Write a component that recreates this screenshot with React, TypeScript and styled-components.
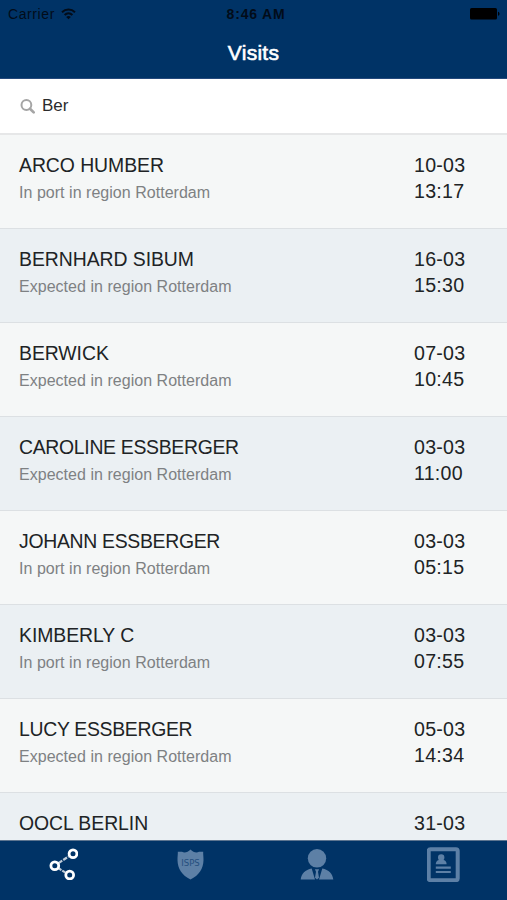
import React from "react";
import styled, { createGlobalStyle } from "styled-components";

const GlobalStyle = createGlobalStyle`
  *, *::before, *::after { box-sizing: border-box; }
  body {
    margin: 0;
    font-family: "Liberation Sans", Arial, Helvetica, sans-serif;
    color: #202325;
  }
`;

const Screen = styled.div`
  display: flex;
  flex-direction: column;
  height: 900px;
  overflow: hidden;
  background: #f5f7f7;
`;

const Header = styled.header`
  flex: none;
  height: 79px;
  background: #003366;
  border-bottom: 1px solid #24497c;
`;

const StatusBar = styled.div`
  display: grid;
  grid-template-columns: 1fr auto 1fr;
  align-items: center;
  height: 27px;
  padding: 0 7px 0 8px;
  color: #020c19;
`;

const Carrier = styled.div`
  display: flex;
  align-items: center;
  gap: 6px;
  font-size: 14px;
  letter-spacing: 0.6px;
`;

const Clock = styled.div`
  padding-left: 4px;
  font-size: 14px;
  font-weight: 700;
  letter-spacing: 0.8px;
`;

const BatterySlot = styled.div`
  display: flex;
  justify-content: flex-end;
`;

const Title = styled.h1`
  margin: 0;
  height: 51px;
  line-height: 51px;
  text-align: center;
  color: #ffffff;
  font-size: 21px;
  font-weight: 400;
  letter-spacing: 0.25px;
  -webkit-text-stroke: 0.6px #ffffff;
`;

const SearchBar = styled.label`
  flex: none;
  display: flex;
  align-items: center;
  gap: 7px;
  height: 56px;
  padding: 0 20px;
  background: #ffffff;
  border-bottom: 2px solid #e6e7e8;
`;

const SearchInput = styled.input`
  flex: 1;
  min-width: 0;
  padding: 0;
  border: 0;
  outline: 0;
  background: transparent;
  color: #2b2b2b;
  font: 17px "Liberation Sans", Arial, sans-serif;
`;

const List = styled.ul`
  flex: 1;
  min-height: 0;
  overflow: hidden;
  margin: 0;
  padding: 0;
  list-style: none;
`;

const Row = styled.li`
  display: grid;
  grid-template-columns: 1fr 73px;
  height: 94px;
  padding: 17px 20px 0 19px;
  background: #f5f7f7;
  border-bottom: 1px solid #dce0e3;

  &:nth-child(even) { background: #ebf0f3; }
`;

const Name = styled.div<{ $tight: boolean }>`
  height: 27px;
  line-height: 27px;
  font-size: 19.4px;
  letter-spacing: ${(p) => (p.$tight ? "-0.3px" : "-0.05px")};
  white-space: nowrap;
`;

const Status = styled.div`
  height: 26px;
  line-height: 28px;
  color: #7e8183;
  font-size: 16px;
  letter-spacing: 0.03px;
  white-space: nowrap;
`;

const Moment = styled.div`
  line-height: 26px;
  font-size: 19.6px;
  letter-spacing: 0.25px;
  white-space: nowrap;
`;

const TabBar = styled.nav`
  flex: none;
  display: grid;
  grid-template-columns: repeat(4, 1fr);
  height: 60px;
  background: #003366;
  border-top: 1px solid #5d7590;
`;

const Tab = styled.button<{ $active?: boolean }>`
  display: flex;
  justify-content: center;
  align-items: flex-start;
  padding: 5px 0 0;
  border: 0;
  background: transparent;
  color: ${(p) => (p.$active ? "#ffffff" : "#5d80a6")};
`;

const visits = [
  ["ARCO HUMBER", "In port in region Rotterdam", "10-03", "13:17"],
  ["BERNHARD SIBUM", "Expected in region Rotterdam", "16-03", "15:30"],
  ["BERWICK", "Expected in region Rotterdam", "07-03", "10:45"],
  ["CAROLINE ESSBERGER", "Expected in region Rotterdam", "03-03", "11:00"],
  ["JOHANN ESSBERGER", "In port in region Rotterdam", "03-03", "05:15"],
  ["KIMBERLY C", "In port in region Rotterdam", "03-03", "07:55"],
  ["LUCY ESSBERGER", "Expected in region Rotterdam", "05-03", "14:34"],
  ["OOCL BERLIN", "", "31-03", ""],
];

const WifiIcon = () => (
  <svg width="15" height="12" viewBox="0 0 15 12" fill="none" stroke="currentColor" strokeWidth="2">
    <path d="M1 4.3C4.7.7 10.3.7 14 4.3M3.6 7c2.3-2.2 5.5-2.2 7.8 0" />
    <path d="M5.2 8.9c1.3-1.3 3.3-1.3 4.6 0L7.5 11.3z" fill="currentColor" stroke="none" />
  </svg>
);

const BatteryIcon = () => (
  <svg width="30" height="12" viewBox="0 0 30 12" fill="#000">
    <rect width="27" height="11.5" rx="1.6" />
    <path d="M28 3.7c2 .5 2 3.6 0 4.1z" />
  </svg>
);

const SearchIcon = () => (
  <svg width="15" height="16" viewBox="0 0 15 16" fill="none" stroke="#a5a5a5">
    <circle cx="6.4" cy="7" r="4.9" strokeWidth="2" />
    <path d="m10 10.700 3.700 3.700" strokeWidth="2.700" strokeLinecap="round" />
  </svg>
);

const RouteIcon = () => (
  <svg width="30" height="34" viewBox="0 0 30 34" fill="none" stroke="currentColor">
    <path d="m10.500 17.200 10-6.700" strokeWidth="2.200" strokeDasharray="4.500 1.200" opacity=".75" />
    <path d="m10.500 22.300 7 4.300" strokeWidth="2.200" strokeDasharray="3.400 1" opacity=".75" />
    <g strokeWidth="2.800">
      <circle cx="6.800" cy="19.800" r="3.900" />
      <circle cx="25" cy="7.800" r="3.900" />
      <circle cx="21.700" cy="29" r="3.900" />
    </g>
  </svg>
);

const ShieldIcon = () => (
  <svg width="28" height="34" viewBox="-0.5 0 28 34">
    <path
      d="M14 3.500c2.600 2.700 5.900 3.600 8.500 2.300h4.200c-.2 2.200.4 5.200.3 8.500C26.800 22.500 22.500 29.500 14 33.500 5.500 29.500 1.200 22.500 1 14.300c-.1-3.300.5-6.300.3-8.500h4.200C8.100 7.100 11.400 6.200 14 3.500z"
      fill="currentColor"
    />
    <text
      x="14" y="20" textAnchor="middle" textLength="18.500" lengthAdjust="spacingAndGlyphs"
      fontFamily="DejaVu Sans" fontSize="9" fill="#254f7e"
    >
      ISPS
    </text>
  </svg>
);

const AgentIcon = () => (
  <svg width="34" height="34" viewBox="0 0 34 34" fill="currentColor">
    <ellipse cx="17" cy="12.300" rx="9.200" ry="9.300" />
    <path d="M.7 33.500C1.400 27.800 5.200 23.700 11.700 22.500L15 33.500zM33.300 33.500C32.600 27.800 28.800 23.700 22.300 22.500L19 33.500z" />
    <path d="M14.900 23.200h4.200L18 25.700l1 6.100-2 1.700-2-1.700 1-6.100z" />
  </svg>
);

const CardIcon = () => (
  <svg width="34" height="36" viewBox="1 0 34 36" fill="currentColor">
    <rect x="2.700" y="3.200" width="29" height="31" rx="1.800" fill="none" stroke="currentColor" strokeWidth="4" />
    <circle cx="15.200" cy="11.400" r="3.200" />
    <path d="M9.800 18.300c0-3.200 2-4.500 5.400-4.500s5.400 1.300 5.400 4.500z" />
    <path d="M9.800 20.600h15v2.100h-15zM9.800 25h15v2.100h-15z" />
  </svg>
);

export default function App() {
  return (
    <>
      <GlobalStyle />
      <Screen>
        <Header>
          <StatusBar>
            <Carrier>Carrier <WifiIcon /></Carrier>
            <Clock>8:46 AM</Clock>
            <BatterySlot><BatteryIcon /></BatterySlot>
          </StatusBar>
          <Title>Visits</Title>
        </Header>
        <SearchBar>
          <SearchIcon />
          <SearchInput type="text" defaultValue="Ber" aria-label="Search visits" />
        </SearchBar>
        <List>
          {visits.map(([name, status, date, time]) => (
            <Row key={name}>
              <div>
                <Name $tight={name.length > 13 && name.endsWith("BERGER")}>{name}</Name>
                <Status>{status}</Status>
              </div>
              <Moment>
                <div>{date}</div>
                <div>{time}</div>
              </Moment>
            </Row>
          ))}
        </List>
        <TabBar>
          <Tab $active aria-label="Visits"><RouteIcon /></Tab>
          <Tab aria-label="ISPS"><ShieldIcon /></Tab>
          <Tab aria-label="Agents"><AgentIcon /></Tab>
          <Tab aria-label="Contact details"><CardIcon /></Tab>
        </TabBar>
      </Screen>
    </>
  );
}
